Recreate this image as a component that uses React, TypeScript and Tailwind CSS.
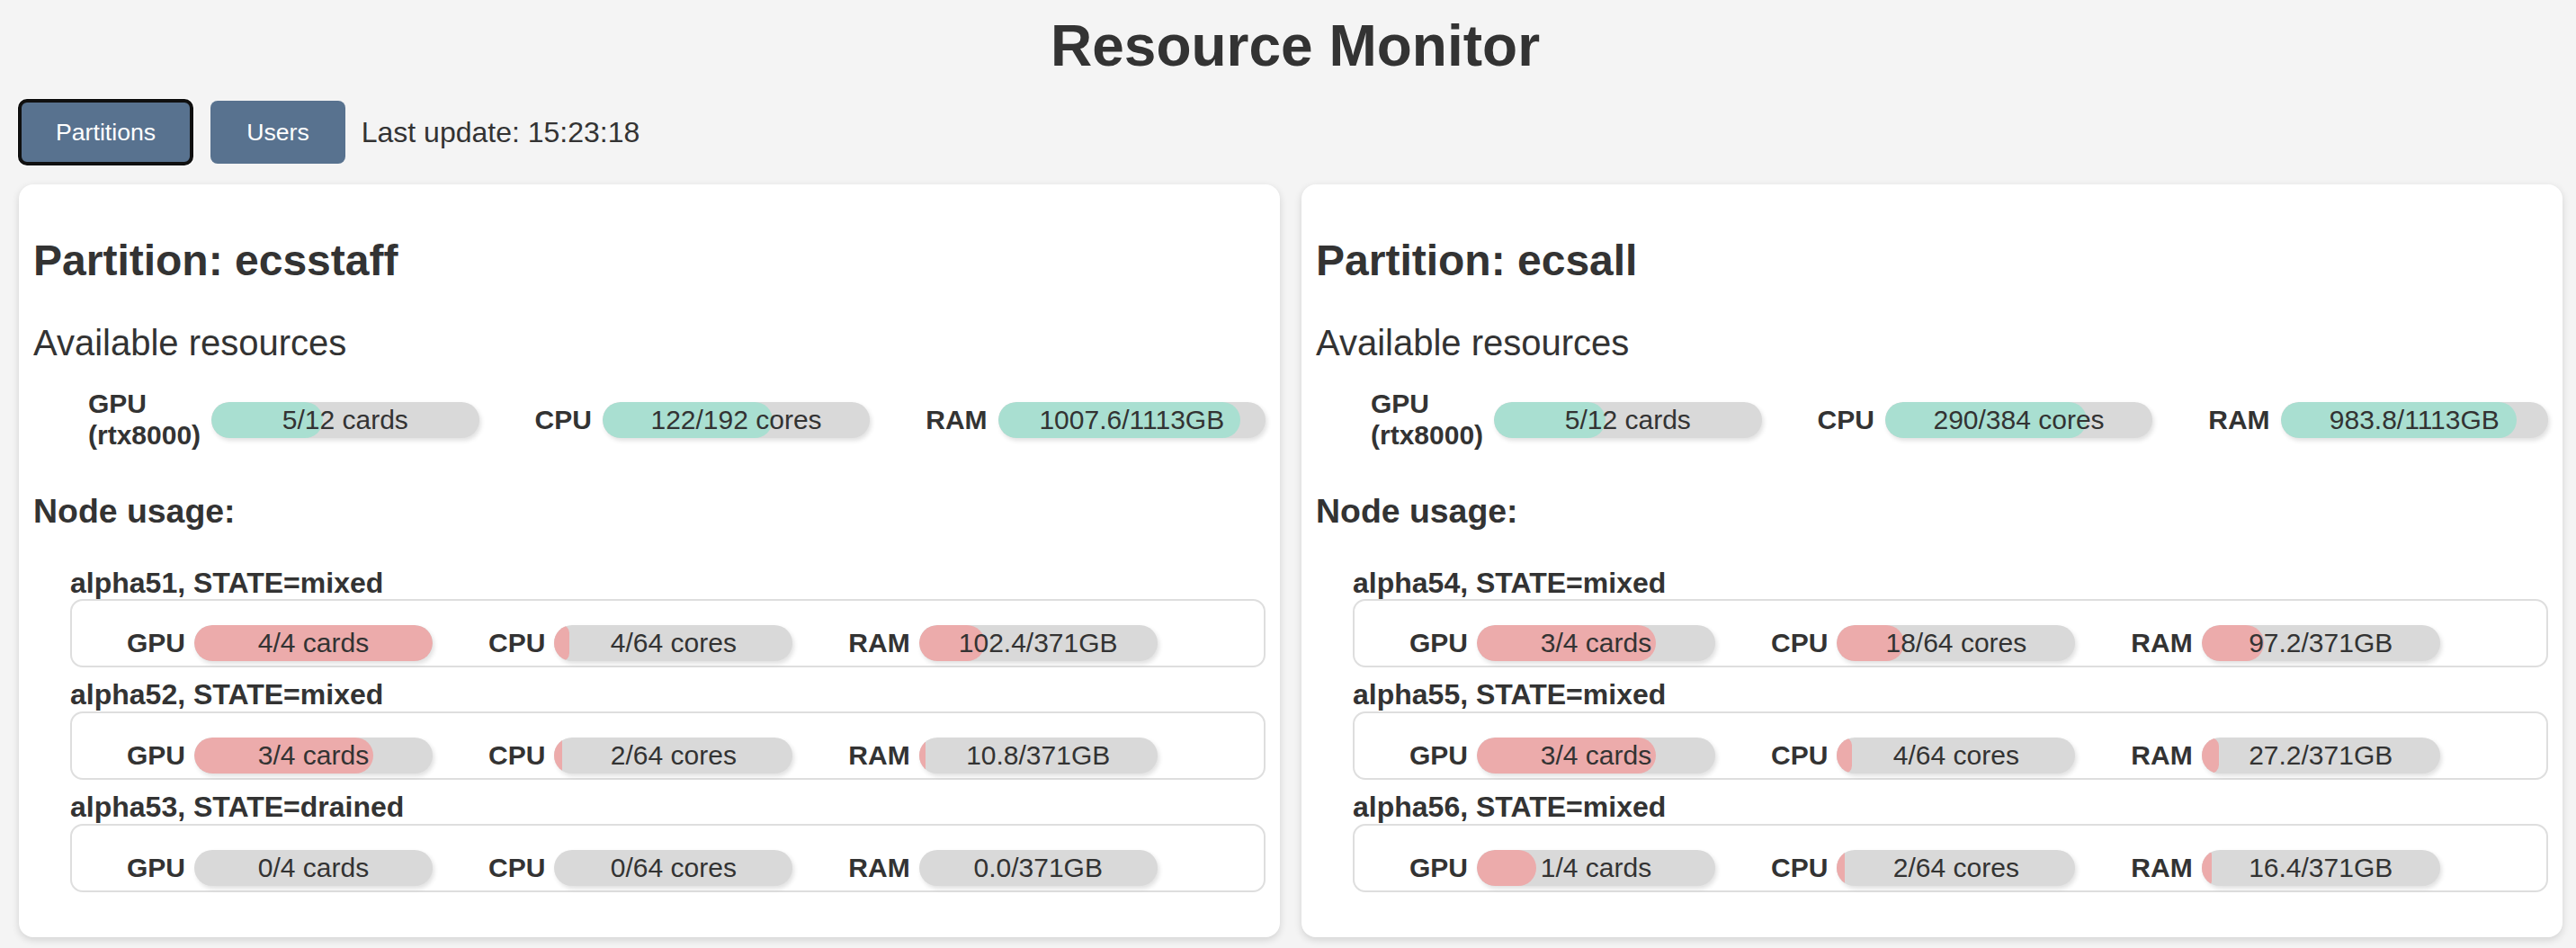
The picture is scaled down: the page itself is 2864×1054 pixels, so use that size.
import React from "react";

type Node = {
  name: string;
  state: string;
  gpu: [number, number];
  cpu: [number, number];
  ram: [number, number];
};

type Partition = {
  name: string;
  gpu: [number, number];
  cpu: [number, number];
  ram: [number, number];
  nodes: Node[];
};

const partitions: Partition[] = [
  {
    name: "ecsstaff",
    gpu: [5, 12],
    cpu: [122, 192],
    ram: [1007.6, 1113],
    nodes: [
      { name: "alpha51", state: "mixed", gpu: [4, 4], cpu: [4, 64], ram: [102.4, 371] },
      { name: "alpha52", state: "mixed", gpu: [3, 4], cpu: [2, 64], ram: [10.8, 371] },
      { name: "alpha53", state: "drained", gpu: [0, 4], cpu: [0, 64], ram: [0.0, 371] },
    ],
  },
  {
    name: "ecsall",
    gpu: [5, 12],
    cpu: [290, 384],
    ram: [983.8, 1113],
    nodes: [
      { name: "alpha54", state: "mixed", gpu: [3, 4], cpu: [18, 64], ram: [97.2, 371] },
      { name: "alpha55", state: "mixed", gpu: [3, 4], cpu: [4, 64], ram: [27.2, 371] },
      { name: "alpha56", state: "mixed", gpu: [1, 4], cpu: [2, 64], ram: [16.4, 371] },
    ],
  },
];

function Bar({
  value,
  text,
  fill,
  className = "",
}: {
  value: [number, number];
  text: string;
  fill: string;
  className?: string;
}) {
  const pct = value[1] > 0 ? (value[0] / value[1]) * 100 : 0;
  return (
    <div
      className={`relative h-[40px] overflow-hidden rounded-full bg-[#d9d9d9] shadow-[2px_3px_5px_rgba(0,0,0,0.12)] ${className}`}
    >
      <div className={`absolute inset-y-0 left-0 rounded-full ${fill}`} style={{ width: `${pct}%` }} />
      <div className="relative flex h-full items-center justify-center text-[30px] leading-[1.15] text-[#333]">
        {text}
      </div>
    </div>
  );
}

const label = "text-[30px] font-bold leading-[1.15] text-[#333]";

function PartitionCard({ p }: { p: Partition }) {
  return (
    <div className="rounded-[16px] bg-white px-[16px] pt-[57px] pb-[50px] shadow-[0_3px_9px_rgba(0,0,0,0.14)]">
      <h2 className="text-[48px] font-bold leading-[1.15] text-[#333]">Partition: {p.name}</h2>
      <div className="mt-[41px] text-[40px] leading-[1.15] text-[#333]">Available resources</div>

      {/* Available resources */}
      <div className="mt-[28px] flex items-center pl-[61px]">
        <div className={`${label} mr-[12px]`}>
          GPU
          <br />
          (rtx8000)
        </div>
        <Bar className="flex-1" value={p.gpu} text={`${p.gpu[0]}/${p.gpu[1]} cards`} fill="bg-[#a9dfd1]" />
        <div className={`${label} ml-[62px] mr-[12px]`}>CPU</div>
        <Bar className="flex-1" value={p.cpu} text={`${p.cpu[0]}/${p.cpu[1]} cores`} fill="bg-[#a9dfd1]" />
        <div className={`${label} ml-[62px] mr-[12px]`}>RAM</div>
        <Bar
          className="flex-1"
          value={p.ram}
          text={`${p.ram[0].toFixed(1)}/${p.ram[1]}GB`}
          fill="bg-[#a9dfd1]"
        />
      </div>

      <h3 className="mt-[46px] text-[37.44px] font-bold leading-[1.15] text-[#333]">Node usage:</h3>

      {/* Nodes */}
      <div className="mt-[39px] ml-[41px] flex flex-col gap-[12px]">
        {p.nodes.map((n) => (
          <div key={n.name}>
            <div className="text-[32px] font-bold leading-[1.15] text-[#333]">
              {n.name}, STATE={n.state}
            </div>
            <div className="flex items-center rounded-[14px] border-2 border-[#dedede] pt-[27px] pb-[5px] pl-[61px]">
              <div className={`${label} mr-[10px]`}>GPU</div>
              <Bar className="w-[265px]" value={n.gpu} text={`${n.gpu[0]}/${n.gpu[1]} cards`} fill="bg-[#ecabab]" />
              <div className={`${label} ml-[62px] mr-[10px]`}>CPU</div>
              <Bar className="w-[265px]" value={n.cpu} text={`${n.cpu[0]}/${n.cpu[1]} cores`} fill="bg-[#ecabab]" />
              <div className={`${label} ml-[62px] mr-[10px]`}>RAM</div>
              <Bar
                className="w-[265px]"
                value={n.ram}
                text={`${n.ram[0].toFixed(1)}/${n.ram[1]}GB`}
                fill="bg-[#ecabab]"
              />
            </div>
          </div>
        ))}
      </div>
    </div>
  );
}

export default function App() {
  return (
    <div className="min-h-screen bg-[#f4f4f4] pt-[15px] font-['Liberation_Sans',Arial,sans-serif] text-[#333]">
      <h1 className="pl-[16px] text-center text-[64px] font-bold leading-[1.15] text-[#333]">Resource Monitor</h1>

      <div className="mt-[23px] flex items-center pl-[22px]">
        <button className="rounded-[8px] bg-[#58728f] px-[40px] py-[20px] text-[26.67px] leading-[1.15] text-white shadow-[0_0_0_3px_white] outline-4 -outline-offset-2 outline-[#101010]">
          Partitions
        </button>
        <button className="ml-[21px] rounded-[8px] bg-[#58728f] px-[40px] py-[20px] text-[26.67px] leading-[1.15] text-white">
          Users
        </button>
        <span className="ml-[18px] text-[32px] leading-[1.15] text-[#333]">Last update: 15:23:18</span>
      </div>

      <div className="mt-[23px] grid grid-cols-2 gap-[24px] pl-[21px] pr-[15px]">
        {partitions.map((p) => (
          <PartitionCard key={p.name} p={p} />
        ))}
      </div>
    </div>
  );
}
